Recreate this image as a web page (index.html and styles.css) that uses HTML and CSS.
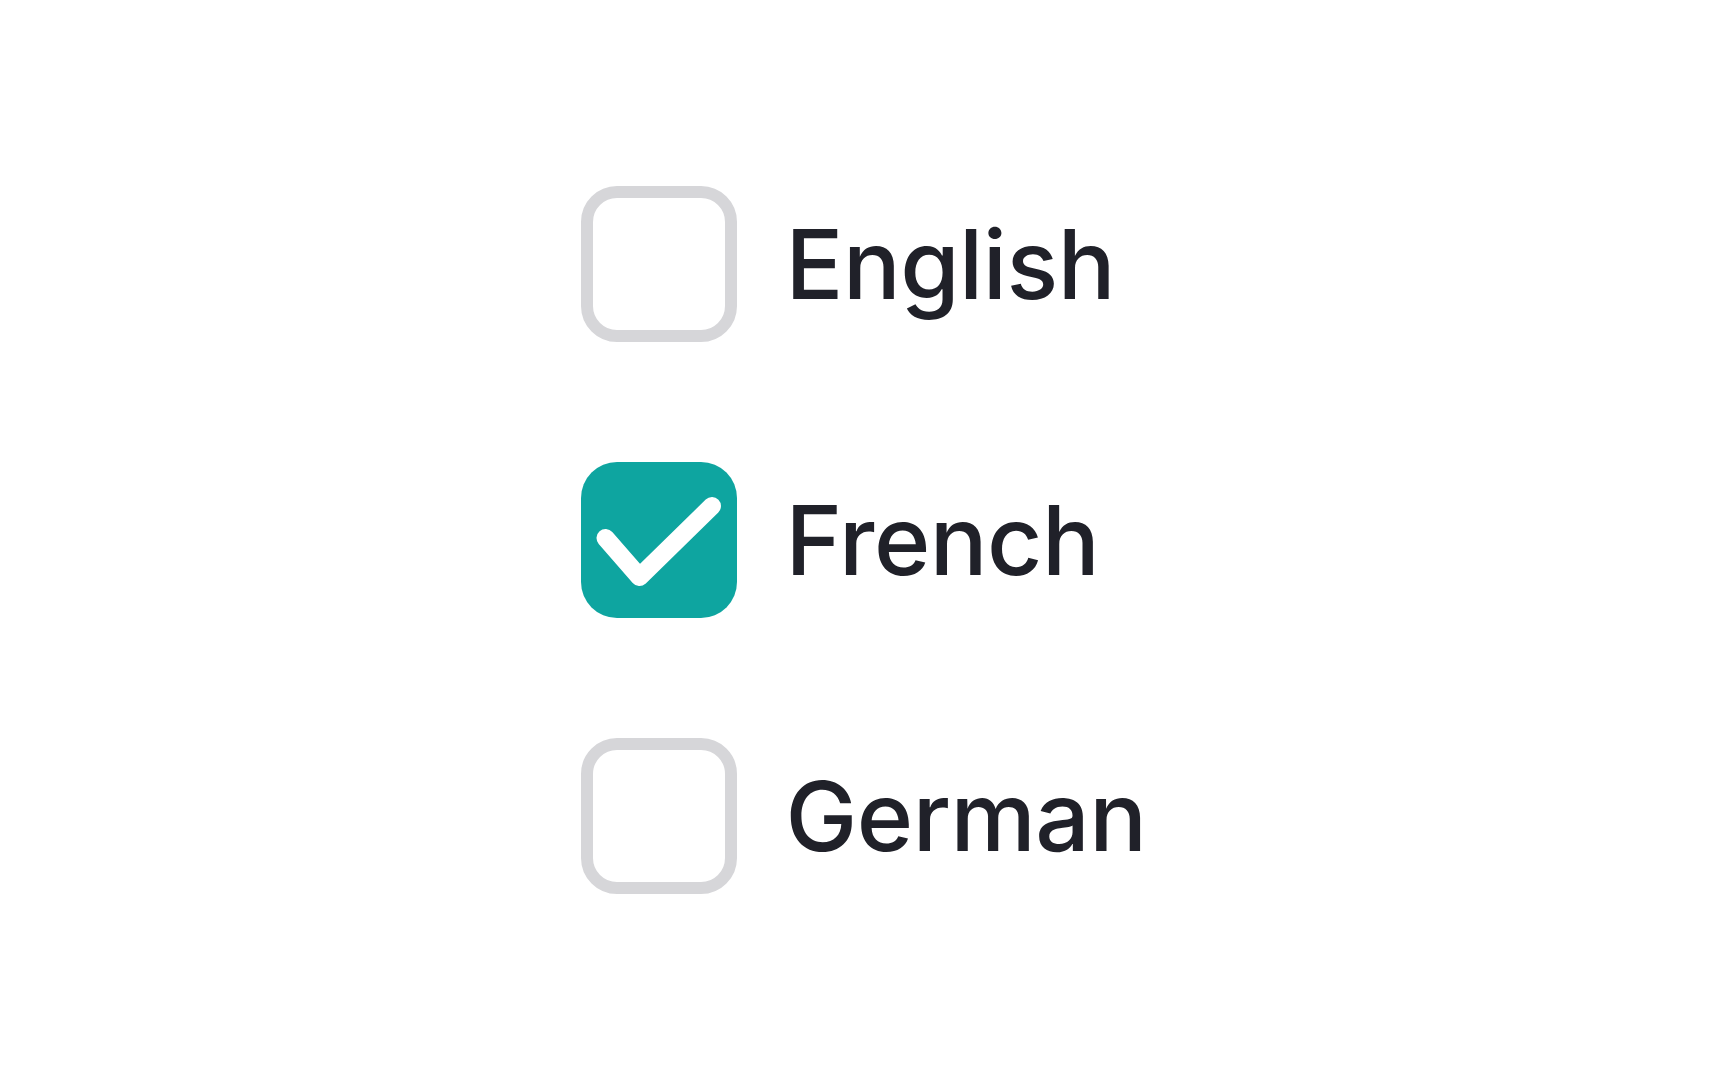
FILE: index.html
```html
<!DOCTYPE html>
<html lang="en">
<head>
<meta charset="utf-8">
<link rel="stylesheet" href="styles.css">
</head>
<body>
<main class="page">
  <div class="list">
    <label class="item">
      <span class="box"></span>
      <span class="label">English</span>
    </label>
    <label class="item">
      <span class="box checked">
        <svg viewBox="0 0 156 156" width="156" height="156"><path d="M24.5 76 L58.5 115 L131 44" fill="none" stroke="#fff" stroke-width="18" stroke-linecap="round" stroke-linejoin="round"/></svg>
      </span>
      <span class="label">French</span>
    </label>
    <label class="item">
      <span class="box"></span>
      <span class="label">German</span>
    </label>
  </div>
</main>
</body>
</html>
```
FILE: styles.css
```css
html, body {
  margin: 0;
  padding: 0;
  background: #ffffff;
}
.page {
  width: 1728px;
  height: 1080px;
  display: flex;
  align-items: center;
  justify-content: center;
}
.list {
  display: flex;
  flex-direction: column;
  gap: 120px;
}
.item {
  display: flex;
  align-items: center;
  gap: 48px;
}
.box {
  width: 156px;
  height: 156px;
  box-sizing: border-box;
  border: 12px solid #d6d6d9;
  border-radius: 36px;
  background: #fff;
  flex: none;
}
.box.checked {
  background: #0ea5a0;
  border: none;
}
.box svg {
  display: block;
}
.label {
  font-family: "Inter", "Liberation Sans", sans-serif;
  font-size: 96px;
  color: #202129;
  line-height: 1;
  font-weight: 500;
  letter-spacing: -0.5px;
}
```
